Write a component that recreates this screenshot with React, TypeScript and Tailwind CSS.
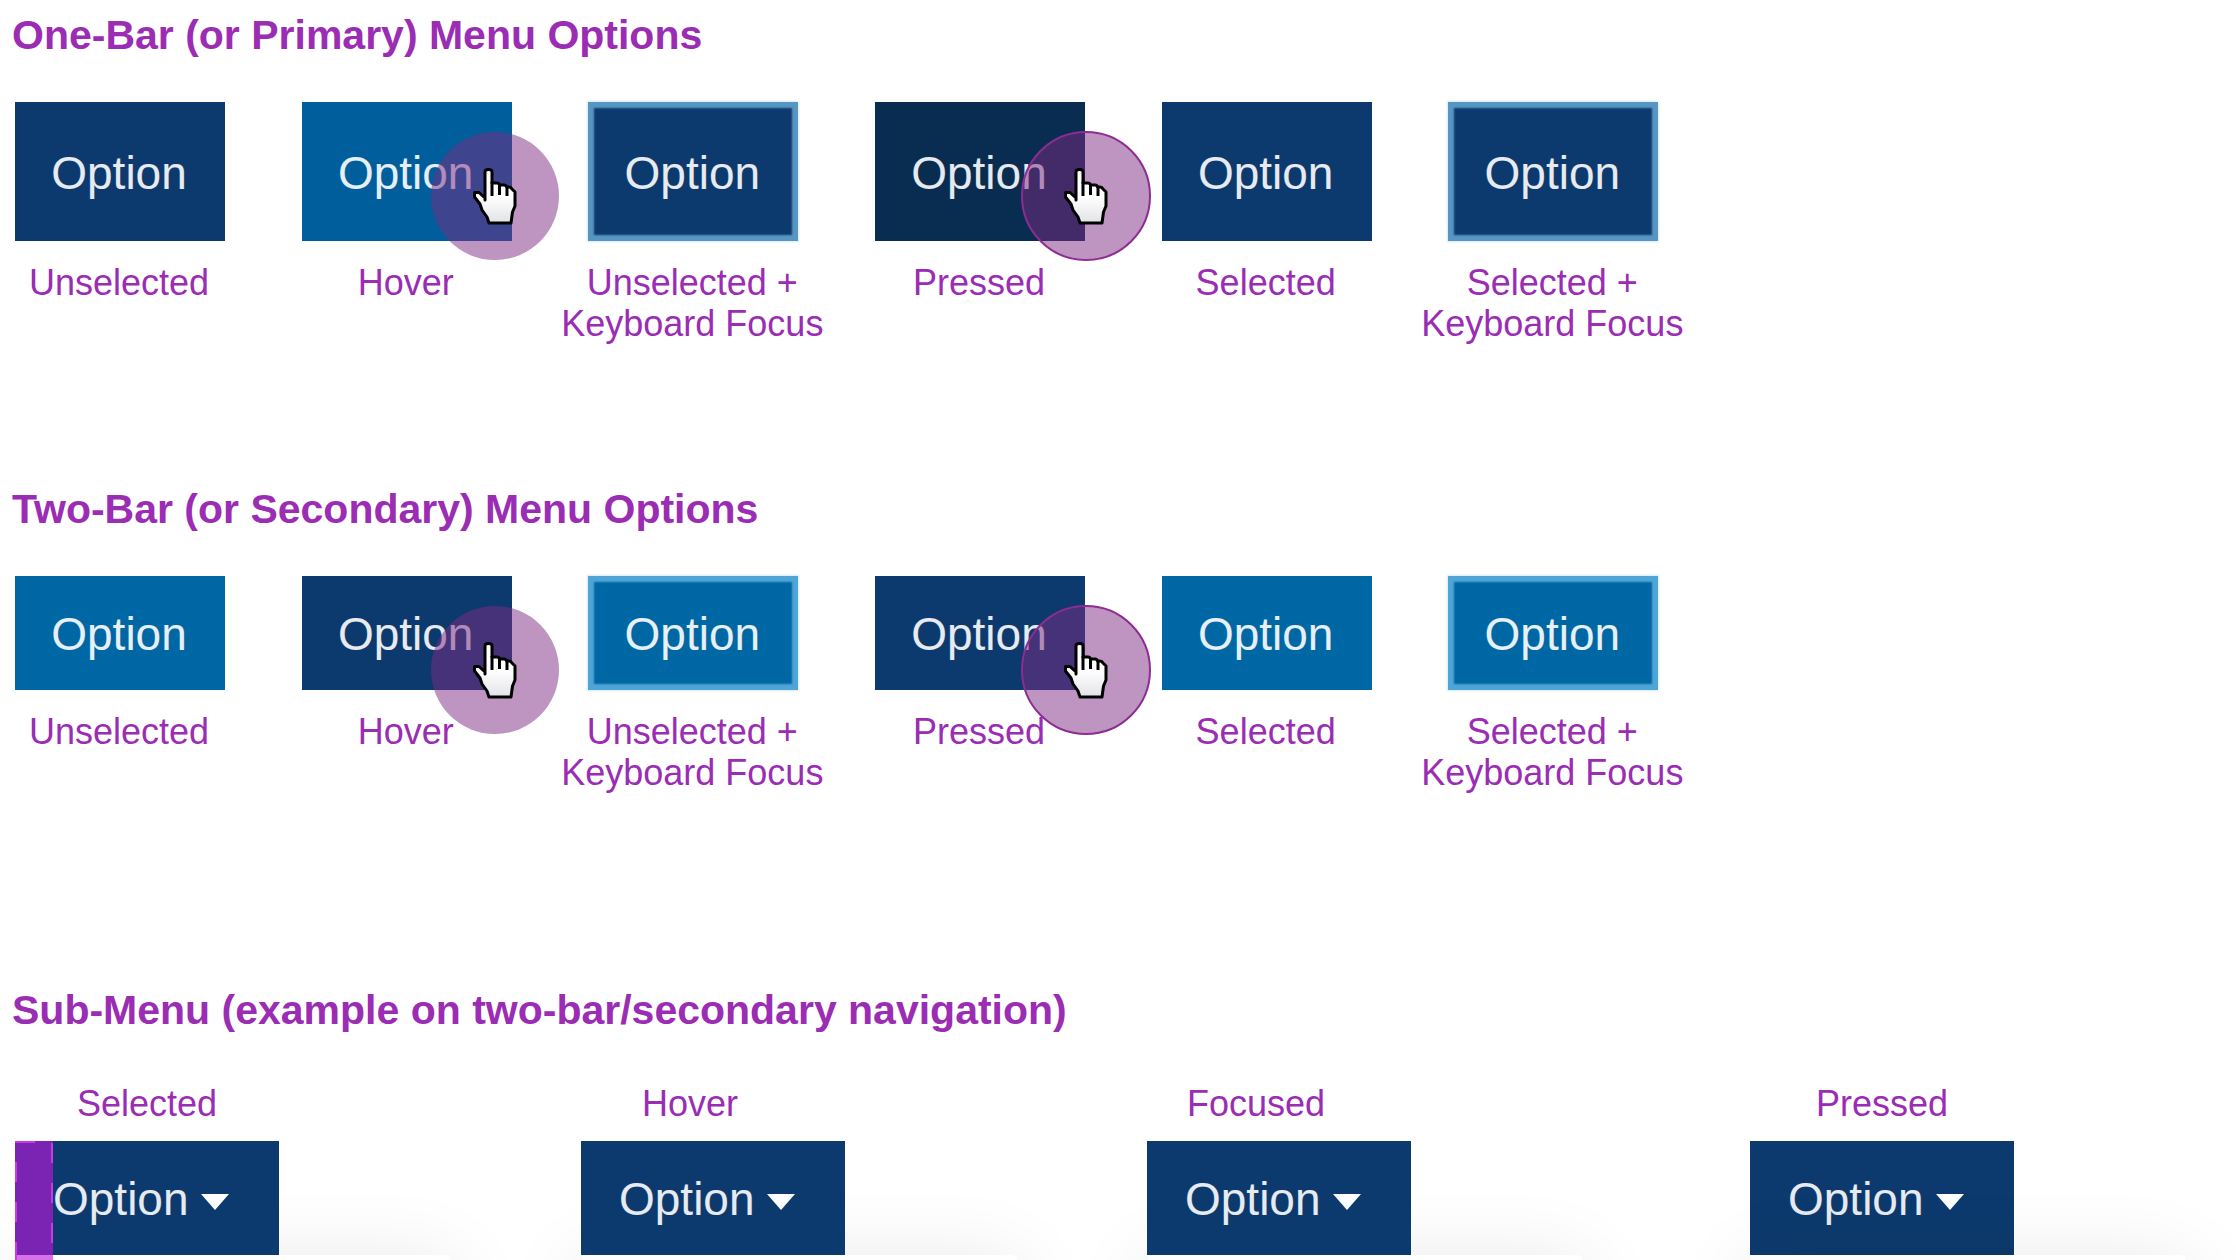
import { clsx } from "clsx";

type Pointer = "hover" | "pressed";

type MenuOption = {
  caption: string[];
  color: string;
  pointer?: Pointer;
};

const focusDark =
  "bg-[#0d3a6e] shadow-[inset_0_0_2px_6px_#5795c3,0_0_2px_1px_#d3eaf7]";
const focusLight =
  "bg-[#0067a5] shadow-[inset_0_0_2px_6px_#4fa5d6,0_0_2px_1px_#d3eaf7]";

const primaryOptions: MenuOption[] = [
  { caption: ["Unselected"], color: "bg-[#0d3a6e]" },
  { caption: ["Hover"], color: "bg-[#005e9c]", pointer: "hover" },
  { caption: ["Unselected +", "Keyboard Focus"], color: focusDark },
  { caption: ["Pressed"], color: "bg-[#082d51]", pointer: "pressed" },
  { caption: ["Selected"], color: "bg-[#0d3a6e]" },
  { caption: ["Selected +", "Keyboard Focus"], color: focusDark },
];

const secondaryOptions: MenuOption[] = [
  { caption: ["Unselected"], color: "bg-[#0067a5]" },
  { caption: ["Hover"], color: "bg-[#0d3a6e]", pointer: "hover" },
  { caption: ["Unselected +", "Keyboard Focus"], color: focusLight },
  { caption: ["Pressed"], color: "bg-[#0d3a6e]", pointer: "pressed" },
  { caption: ["Selected"], color: "bg-[#0067a5]" },
  { caption: ["Selected +", "Keyboard Focus"], color: focusLight },
];

const subMenus = [
  { caption: "Selected", captionWidth: "w-[264px]", margin: true },
  { caption: "Hover", captionWidth: "w-[218px]" },
  { caption: "Focused", captionWidth: "w-[218px]" },
  { caption: "Pressed", captionWidth: "w-[264px]", raised: true },
];

export default function App() {
  return (
    <main className="h-screen overflow-hidden bg-white pt-[11px] font-['Liberation_Sans',Arial,sans-serif] text-[#9b2cb4]">
      <section>
        <Heading>One-Bar (or Primary) Menu Options</Heading>
        <OptionRow options={primaryOptions} height="h-[139px]" />
      </section>

      <section className="mt-[141px]">
        <Heading>Two-Bar (or Secondary) Menu Options</Heading>
        <OptionRow options={secondaryOptions} height="h-[114px]" />
      </section>

      <section className="mt-[193px]">
        <Heading>Sub-Menu (example on two-bar/secondary navigation)</Heading>
        <div className="mt-[49px] grid grid-cols-[566fr_566fr_603fr_486fr] pl-[15px]">
          {subMenus.map((menu) => (
            <div key={menu.caption}>
              <p
                className={clsx(
                  "text-center text-[36px] leading-[41px]",
                  menu.captionWidth
                )}
              >
                {menu.caption}
              </p>
              <div className="relative mt-[17px]">
                <button
                  type="button"
                  className={clsx(
                    "flex h-[114px] w-[264px] items-center gap-3 bg-[#0d3a6e] pt-[3px] pl-[38px] text-[46px] text-white/90",
                    !menu.raised && "relative z-10"
                  )}
                >
                  Option
                  <svg
                    aria-hidden="true"
                    viewBox="0 0 28 16"
                    className="mt-1 h-4 w-7"
                    fill="#fff"
                  >
                    <path d="M0 0h28L14 16z" />
                  </svg>
                </button>
                {/* Drop-down panel */}
                <div className="relative h-[300px] w-[437px] rounded-lg bg-white shadow-[0_8px_80px_rgba(0,0,0,0.1)]" />
                {menu.margin && <MarginGuide />}
              </div>
            </div>
          ))}
        </div>
      </section>
    </main>
  );
}

function Heading({ children }: { children: string }) {
  return (
    <h2 className="pl-3 text-[41px] leading-[48px] font-bold">{children}</h2>
  );
}

function OptionRow({
  options,
  height,
}: {
  options: MenuOption[];
  height: string;
}) {
  return (
    <div className="mt-[43px] ml-[15px] grid max-w-[1720px] grid-cols-6">
      {options.map((option) => (
        <div
          key={option.caption.join(" ")}
          className="flex w-[210px] flex-col items-center"
        >
          <div className="relative w-full">
            <button
              type="button"
              className={clsx(
                "w-full pt-[3px] pr-[2px] text-[46px] text-white/90",
                height,
                option.color
              )}
            >
              Option
            </button>
            {option.pointer && <PointerMark kind={option.pointer} />}
          </div>
          <p className="mt-[21px] pr-[2px] text-center text-[36px] leading-[41px] whitespace-nowrap">
            {option.caption[0]}
            <br />
            {option.caption[1] ?? "\u00a0"}
          </p>
        </div>
      ))}
    </div>
  );
}

// Purple strip that marks the left padding of the menu
function MarginGuide() {
  return (
    <div className="absolute inset-y-0 left-0 z-20 w-[38px] bg-[rgba(192,22,223,0.62)]">
      <svg
        aria-hidden="true"
        className="h-full w-full"
        stroke="#c93be0"
        strokeWidth="2"
        strokeDasharray="20 20"
      >
        <line x1="0" y1="1" x2="38" y2="1" />
        <line x1="1" y1="21" x2="1" y2="100%" />
        <line x1="37" y1="2" x2="37" y2="100%" />
      </svg>
    </div>
  );
}

function PointerMark({ kind }: { kind: Pointer }) {
  return (
    <span
      aria-hidden="true"
      className={clsx(
        "absolute flex size-32 items-center justify-center rounded-full bg-[rgba(125,42,130,0.5)]",
        kind === "hover"
          ? "top-[30px] left-[129px]"
          : "top-[30px] left-[147px] outline-2 -outline-offset-1 outline-[#8d2c92]"
      )}
    >
      <HandIcon />
    </span>
  );
}

function HandIcon() {
  return (
    <svg viewBox="0 0 44 57" className="h-[57px] w-11">
      <defs>
        <linearGradient id="hand" x1="0" y1="0" x2="0" y2="1">
          <stop offset="0.5" stopColor="#fff" />
          <stop offset="1" stopColor="#e2e3e6" />
        </linearGradient>
      </defs>
      <path
        d="M12 32V4q0-2.500 3.500-2.500T19 4v11h5q2 0 2.500 2H31q2 0 2.500 2H36q2 0 3 2l3 3v14l-2.500 6L38 55H16l-2-6-5-7-2-6-5.500-7v-4.500H6l6 5.500z"
        fill="url(#hand)"
        stroke="#000"
        strokeWidth="3"
        strokeLinejoin="round"
      />
      <path
        d="M19 14v14M26.500 17v10M34 19v9"
        stroke="#000"
        strokeWidth="3"
      />
    </svg>
  );
}
